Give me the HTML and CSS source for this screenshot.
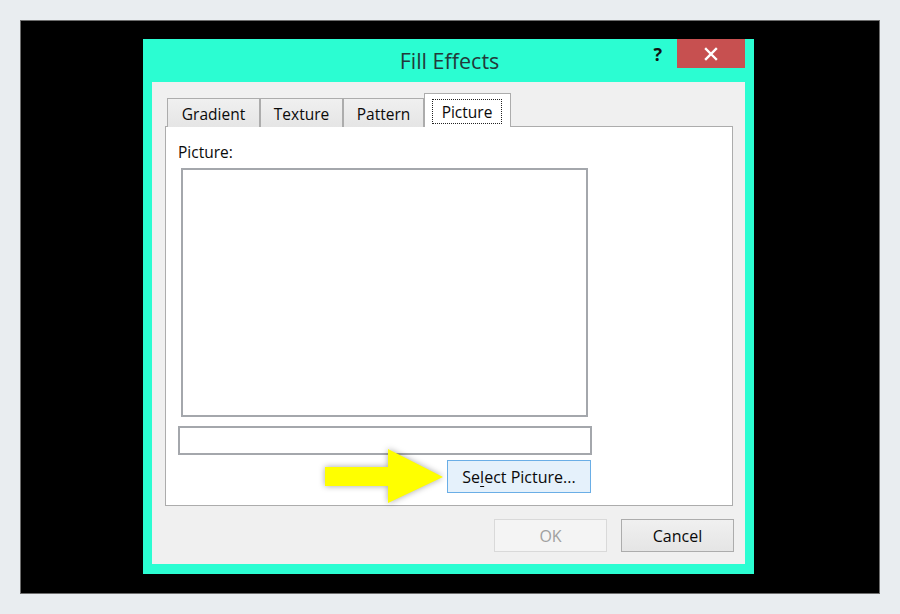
FILE: index.html
```html
<!DOCTYPE html>
<html lang="en">
<head>
    <meta charset="UTF-8">
    <meta name="viewport" content="width=device-width, initial-scale=1.0">
    <title>Fill Effects</title>
    <link rel="stylesheet" href="styles.css">
</head>
<body>
    <div class="frame">
        <div class="dialog">
            <div class="titlebar">
                <span class="title">Fill Effects</span>
                <span class="help">?</span>
                <div class="close">
                    <svg width="14" height="14" viewBox="0 0 14 14">
                        <path d="M2 2 L12 12 M12 2 L2 12" stroke="#fff" stroke-width="2.4" stroke-linecap="square"/>
                    </svg>
                </div>
            </div>
            <div class="client">
                <div class="tabs">
                    <div class="tab tab-gradient">Gradient</div>
                    <div class="tab tab-texture">Texture</div>
                    <div class="tab tab-pattern">Pattern</div>
                    <div class="tab tab-picture active"><span class="focus">Picture</span></div>
                </div>
                <div class="panel">
                    <div class="label">Picture:</div>
                    <div class="preview"></div>
                    <div class="field"></div>
                    <div class="select-row">
                        <div class="btn btn-select">Se<u>l</u>ect Picture...</div>
                    </div>
                    <!-- callout arrow drawn over the panel -->
                    <svg class="arrow" width="140" height="76" viewBox="0 0 140 76">
                        <polygon points="9,28 72,28 72,10 127,38 72,64 72,47 9,47" fill="#ffff00"/>
                    </svg>
                </div>
                <div class="footer">
                    <div class="btn btn-ok">OK</div>
                    <div class="btn btn-cancel">Cancel</div>
                </div>
            </div>
        </div>
    </div>
</body>
</html>
```

FILE: styles.css
```css
body {
    margin: 0;
    padding: 0;
    background-color: #e9edf0;
    font-family: "Open Sans", "Noto Sans", sans-serif;
    color: #0a0a0a;
}
.frame {
    margin: 20px;
    width: 860px;
    height: 574px;
    box-sizing: border-box;
    background-color: #000;
    border: 1px solid #6d6d6d;
    padding: 18px 0 0 122px;
}
.dialog {
    width: 611px;
    background-color: #2bfdd2;
    padding: 0 9px 10px 9px;
    box-sizing: border-box;
}
.titlebar {
    position: relative;
    height: 43px;
    display: flex;
    align-items: center;
    justify-content: center;
}
.title {
    font-size: 21.5px;
    color: #23393a;
    margin-top: -1px;
    margin-left: 2px;
}
.help {
    position: absolute;
    right: 83px;
    top: 3px;
    font-size: 18px;
    font-weight: bold;
    color: #111;
}
.close {
    position: absolute;
    right: 0;
    top: 0;
    width: 68px;
    height: 29px;
    background-color: #c75050;
    display: flex;
    align-items: center;
    justify-content: center;
}
.client {
    background-color: #f0f0f0;
    height: 482px;
    padding: 12px 11px 0 13px;
    box-sizing: border-box;
}
.tabs {
    display: flex;
    align-items: flex-end;
    height: 33px;
    margin-left: 2px;
    margin-bottom: -1px;
    position: relative;
    z-index: 1;
}
.tab {
    height: 29px;
    box-sizing: border-box;
    border: 1px solid #acacac;
    border-bottom: none;
    background: linear-gradient(#f0f0f0, #e5e5e5);
    font-size: 15.5px;
    display: flex;
    align-items: center;
    justify-content: center;
    padding-top: 1px;
}
.tab-gradient { width: 93px; }
.tab-texture { width: 83px; }
.tab-pattern { width: 81px; }
.tab-picture { width: 87px; }
.tab.active {
    height: 34px;
    background: #fff;
    padding-top: 2px;
}
.focus {
    border: 1px dotted #222;
    width: 70px;
    height: 25px;
    box-sizing: border-box;
    display: flex;
    align-items: center;
    justify-content: center;
    margin-left: -1px;
}
.panel {
    position: relative;
    width: 568px;
    height: 380px;
    box-sizing: border-box;
    background-color: #fff;
    border: 1px solid #acacac;
    padding: 15px 0 0 12px;
}
.label {
    font-size: 15.5px;
    line-height: 20px;
}
.preview {
    width: 407px;
    height: 249px;
    box-sizing: border-box;
    border: 2px solid #a4a7ac;
    margin: 6px 0 0 3px;
}
.field {
    width: 414px;
    height: 29px;
    box-sizing: border-box;
    border: 2px solid #a4a7ac;
    margin-top: 9px;
}
.select-row {
    width: 413px;
    display: flex;
    justify-content: flex-end;
    margin-top: 5px;
}
.btn {
    width: 113px;
    height: 33px;
    box-sizing: border-box;
    display: flex;
    align-items: center;
    justify-content: center;
    font-size: 16px;
    border: 1px solid #acacac;
    background: linear-gradient(#f0f0f0, #e5e5e5);
}
.btn-select {
    width: 144px;
    background: #e5f1fb;
    border-color: #6aaee6;
}
.btn u {
    text-underline-offset: 3px;
}
.footer {
    display: flex;
    justify-content: flex-end;
    gap: 14px;
    margin-top: 13px;
}
.btn-ok {
    color: #a0a0a0;
    background: #f4f4f4;
    border-color: #d9d9d9;
}
.arrow {
    position: absolute;
    left: 150px;
    top: 312px;
    filter: drop-shadow(0 0 3px rgba(0, 0, 0, 0.35));
}
```
